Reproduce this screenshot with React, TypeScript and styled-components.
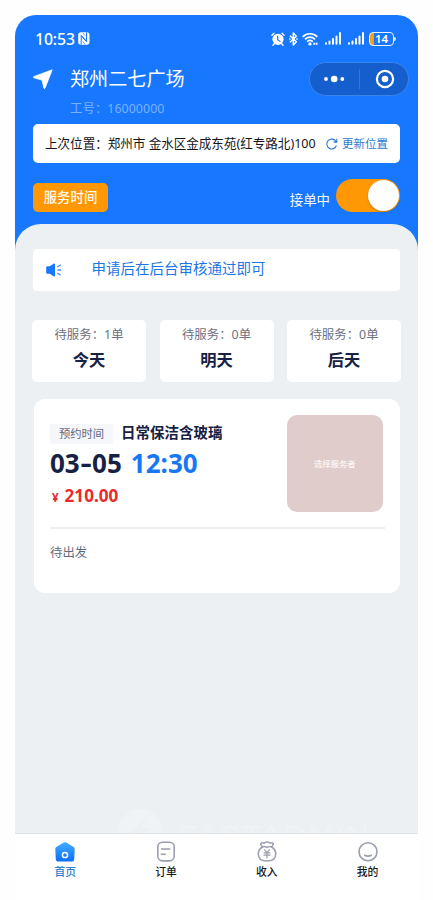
import React from 'react';
import styled, { createGlobalStyle } from 'styled-components';

const GlobalStyle = createGlobalStyle`
  * { box-sizing: border-box; }
  body {
    margin: 0;
    background: #fefefe;
    font-family: "Noto Sans", "Noto Sans CJK SC", sans-serif;
  }
  svg { display: block; flex: none; }
`;

const Stage = styled.div`
  height: 900px;
  padding: 15px 15px 0;
  overflow: hidden;
`;

const Phone = styled.main`
  width: 403px;
  height: 885px;
  display: flex;
  flex-direction: column;
`;

const Screen = styled.div`
  height: 818px;
  background: #1877ff;
  border-radius: 21px 21px 0 0;
  overflow: hidden;
`;

const Header = styled.header`
  height: 209px;
  padding: 0 18px;
`;

const StatusBar = styled.div`
  height: 47px;
  padding: 0 4px 0 2px;
  display: flex;
  align-items: center;
  color: #fff;
`;

const Clock = styled.span`
  font-size: 15.8px;
  line-height: 20px;
  font-weight: 500;
  letter-spacing: -0.1px;
  margin-right: 3px;
`;

const StatusIcons = styled.div`
  margin-left: auto;
  display: flex;
  align-items: center;
`;

const Gap = styled.span<{ $w: number }>`
  width: ${p => p.$w}px;
`;

const Battery = styled.div`
  width: 25px;
  height: 14px;
  border: 1px solid #e9f2ff;
  border-radius: 4px;
  background: linear-gradient(90deg, #ff9c16 4px, transparent 4px);
  font-size: 11.5px;
  font-weight: 600;
  line-height: 12px;
  text-align: center;
  color: #fff;
`;

const BatteryTip = styled.i`
  width: 2px;
  height: 4px;
  border-radius: 0 2px 2px 0;
  background: #d5e6ff;
`;

const TitleRow = styled.div`
  height: 34px;
  display: flex;
  align-items: center;
  margin-right: -9px;
`;

const Place = styled.h1`
  margin: -2px 0 0 17px;
  font: 400 19.1px/28px "Noto Sans CJK SC", sans-serif;
  color: #fff;
`;

const Capsule = styled.div`
  width: 100px;
  height: 34px;
  margin-left: auto;
  border: 1px solid #3b83e8;
  border-radius: 17px;
  background: #145fcd;
  display: flex;
  align-items: center;
  justify-content: center;
`;

const StaffId = styled.div`
  margin: 3px 0 0 37px;
  padding-top: 1px;
  height: 25px;
  font-size: 12.4px;
  line-height: 18px;
  color: #7bb2ff;
  letter-spacing: 0.05px;
`;

const LocationCard = styled.section`
  height: 39px;
  padding: 0 12px;
  border-radius: 5px;
  background: #fff;
  display: flex;
  align-items: center;
  justify-content: space-between;
  white-space: nowrap;
`;

const Address = styled.span`
  font-size: 12.55px;
  line-height: 18px;
  color: #15161a;
`;

const Refresh = styled.button`
  padding: 0;
  border: 0;
  background: none;
  display: flex;
  align-items: center;
  gap: 4px;
  font: 400 11.5px/16px "Noto Sans CJK SC", sans-serif;
  color: #2a7bd2;
`;

const RefreshText = styled.span`
  margin-top: -2px;
`;

const ActionRow = styled.div`
  margin-top: 16px;
  height: 33px;
  display: flex;
  align-items: center;
`;

const TimeButton = styled.button`
  width: 75px;
  height: 29px;
  margin-top: 4px;
  padding: 0 0 3px;
  border: 0;
  border-radius: 5px;
  background: #ff9804;
  font: 500 13.4px/26px "Noto Sans CJK SC", sans-serif;
  color: #fffbea;
`;

const SwitchLabel = styled.span`
  margin: 6px 6px 0 auto;
  font: 400 13.4px/20px "Noto Sans CJK SC", sans-serif;
  color: #f4f9ff;
`;

const Switch = styled.div`
  width: 64px;
  height: 33px;
  padding: 1px;
  border-radius: 17px;
  background: #ff9804;
  display: flex;
  justify-content: flex-end;
`;

const Knob = styled.div`
  width: 31px;
  height: 31px;
  border-radius: 50%;
  background: #fff;
  box-shadow: 0 1px 2px rgba(90, 60, 0, 0.35);
`;

const Content = styled.div`
  height: 609px;
  padding: 25px 18px 0;
  border-radius: 26px 26px 0 0;
  background: #ecf0f3;
  display: flex;
  flex-direction: column;
`;

const Notice = styled.section`
  height: 42px;
  padding: 0 13px;
  border-radius: 4px;
  background: #fff;
  display: flex;
  align-items: center;
  gap: 29.5px;
  font: 400 14.5px/20px "Noto Sans CJK SC", sans-serif;
  color: #1b77e6;
`;

const NoticeText = styled.span`
  margin-top: -4px;
`;

const Days = styled.section`
  margin: 29px -1px 0;
  display: grid;
  grid-template-columns: repeat(3, 1fr);
  gap: 13.5px;
`;

const DayCard = styled.div`
  height: 62px;
  padding-top: 6px;
  border-radius: 5px;
  background: #fff;
  text-align: center;
`;

const DayCount = styled.div`
  font-size: 12.4px;
  line-height: 18px;
  color: #6d7182;
`;

const DayName = styled.div`
  margin-top: 3px;
  font: 700 16.3px/24px "Noto Sans CJK SC", sans-serif;
  color: #172144;
`;

const Order = styled.article`
  margin: 17px 0 0 1px;
  width: 366px;
  height: 194px;
  padding: 16px 15px 0 16px;
  border-radius: 11px;
  background: #fff;
`;

const OrderTop = styled.div`
  height: 114px;
  border-bottom: 2px solid #ebeff1;
  display: flex;
  justify-content: space-between;
`;

const OrderInfo = styled.div`
  padding-top: 5px;
`;

const OrderTitle = styled.div`
  display: flex;
  align-items: center;
`;

const Tag = styled.span`
  width: 63px;
  height: 20px;
  margin: 4px 8px 0 0;
  background: #f5f7fa;
  font: 400 11.3px/18px "Noto Sans CJK SC", sans-serif;
  text-align: center;
  color: #61697f;
`;

const ServiceName = styled.strong`
  font: 700 14.5px/20px "Noto Sans CJK SC", sans-serif;
  color: #172144;
`;

const When = styled.div`
  margin-top: 1px;
  display: flex;
  gap: 9px;
  font-size: 26px;
  line-height: 36px;
  font-weight: 700;
`;

const DateText = styled.span`
  color: #172144;
  display: flex;
`;

const Dash = styled.span`
  transform: scaleX(1.35);
  margin: 0 2px;
`;

const TimeText = styled.span`
  color: #1877f5;
`;

const Price = styled.div`
  margin-top: 3px;
  padding-left: 2px;
  font-size: 17.1px;
  line-height: 24px;
  font-weight: 700;
  color: #ea2b2c;
`;

const Yen = styled.span`
  font-size: 11.5px;
  margin-right: 6px;
`;

const Picker = styled.button`
  width: 96.5px;
  height: 97px;
  margin-right: 2px;
  padding: 0 0 1px;
  border: 0;
  border-radius: 10px;
  background: #e0cdcb;
  font: 500 8.3px/12px "Noto Sans CJK SC", sans-serif;
  color: #fbf6f5;
`;

const OrderState = styled.div`
  margin-top: 13px;
  font: 400 12.4px/20px "Noto Sans CJK SC", sans-serif;
  color: #646b80;
`;

const Watermark = styled.div`
  margin: auto -18px 0 85px;
  height: 24px;
  overflow: hidden;
  display: flex;
  gap: 16px;
  color: #f0f3f5;
  white-space: nowrap;
`;

const WatermarkText = styled.span`
  margin-top: 12px;
  font: 400 32px/32px "Liberation Sans", sans-serif;
  letter-spacing: 1.2px;
`;

const TabBar = styled.nav`
  height: 67px;
  border-top: 1px solid #dfe2e4;
  background: #fff;
  display: grid;
  grid-template-columns: repeat(4, 1fr);
`;

const Tab = styled.div<{ $active?: boolean }>`
  padding-top: 7px;
  display: flex;
  flex-direction: column;
  align-items: center;
  font: 500 10.8px/16px "Noto Sans CJK SC", sans-serif;
  color: ${p => (p.$active ? '#327ecb' : '#17181c')};
`;

const NfcIcon = () => (
  <svg width="12" height="13" viewBox="0 0 12 13" fill="none">
    <rect x=".2" y=".3" width="11.3" height="12.4" rx="2.6" fill="#fff" />
    <path d="M3.2 12.6V3.6L8.4 9.6M8.5.4v9L3.3 3.4" stroke="#1877ff" strokeWidth="1" />
    <path d="m4.9 1 2.2 2.7M4.7 9.4l2.2 2.7" stroke="#1877ff" strokeWidth=".7" />
  </svg>
);

const AlarmIcon = () => (
  <svg width="14" height="14" viewBox="0 0 14 14" fill="none" stroke="#fff" strokeLinecap="round">
    <circle cx="7" cy="7.3" r="5.6" fill="#fff" stroke="none" />
    <path d="M.9 3.3 3 1.2M13.1 3.3 11 1.2M3 12l-1 1.2M11 12l1 1.2" strokeWidth="1.4" />
    <path d="M6.7 4.2v3.4L9 9.4" stroke="#1877ff" strokeWidth="1.2" />
  </svg>
);

const BluetoothIcon = () => (
  <svg width="9" height="14" viewBox="0 0 9 14" fill="none" stroke="#fff" strokeWidth="1.5" strokeLinejoin="round">
    <path d="m1 3.7 6.3 6L4.3 13V1l3 3.3L1 10.3" />
    <path d="M.2 7h1.4M7.3 7h1.4" />
  </svg>
);

const WifiIcon = () => (
  <svg width="16" height="14" viewBox="0 0 16 14" fill="none" stroke="#fff" strokeWidth="1.7">
    <path d="M.7 4.8C4.8.7 11.2.7 15.3 4.8M3 7.3c2.9-2.8 7.1-2.8 10 0M5.2 9.6c1.7-1.5 3.9-1.5 5.6 0" />
    <circle cx="8" cy="11.9" r="1.7" fill="#fff" stroke="none" />
    <path d="M11.3 11.8h4.2" strokeWidth="2" strokeDasharray="1.8 .6" />
  </svg>
);

const SignalIcon = () => (
  <svg width="16" height="13" viewBox="0 0 16 13" fill="none" stroke="#fff" strokeWidth="2" strokeLinecap="round">
    <path d="M1 11.3v.5M4.5 9.5v2.3M8 7v4.8M11.5 4.4v7.4M15 1v10.8" />
  </svg>
);

const ArrowIcon = () => (
  <svg width="20" height="20" viewBox="0 0 20 20">
    <path d="M19.2.8 12 19.2q-.6 1-1.1 0L9 11.1.5 8.7Q-.3 8.2.6 7.7Z" fill="#fff" stroke="#fff" strokeWidth=".8" strokeLinejoin="round" />
  </svg>
);

const CapsuleIcons = () => (
  <svg width="99" height="32" viewBox="0 0 99 32">
    <g fill="#fff">
      <circle cx="16" cy="16" r="1.9" />
      <circle cx="24.2" cy="16" r="3.3" />
      <circle cx="32.3" cy="16" r="1.9" />
      <circle cx="75" cy="16" r="3.3" />
    </g>
    <path d="M49.5 6v20" stroke="#3476d3" />
    <circle cx="75" cy="16" r="8.1" fill="none" stroke="#fff" strokeWidth="2.2" />
  </svg>
);

const RefreshIcon = () => (
  <svg width="12" height="12" viewBox="0 0 12 12" fill="none" stroke="#2a7bd2" strokeWidth="1.1">
    <path d="M10.4 7.5A4.9 4.9 0 1 1 10 3.6M10.8.8v3.3H7.5" />
  </svg>
);

const SpeakerIcon = () => (
  <svg width="16" height="14" viewBox="0 0 16 14">
    <path d="M.2 4.3q0-1 1-1h2.5L7.6.8q1.4-.6 1.4.7v11q0 1.3-1.4.7l-3.9-2.5H1.2q-1 0-1-1Z" fill="#1877ff" />
    <path d="m11.3 4 3.3-2.1M11.5 7h3.7M11.3 10l3.3 2.1" stroke="#438ff6" strokeWidth="1.3" fill="none" />
  </svg>
);

const BoltIcon = () => (
  <svg width="44" height="44" viewBox="0 0 44 44">
    <circle cx="22" cy="22" r="22" fill="#f0f3f5" />
    <path d="M30 7 12 24h10l-8 15 20-20H23Z" fill="#ecf0f3" />
  </svg>
);

const HomeIcon = () => (
  <svg width="22" height="22" viewBox="0 0 22 22">
    <defs>
      <linearGradient id="home" x1="0" y1="0" x2="0" y2="1">
        <stop offset="0" stopColor="#46adff" />
        <stop offset="1" stopColor="#0a6dfb" />
      </linearGradient>
    </defs>
    <path d="M9.8 1.6q1.2-.8 2.4 0l7.1 4.2q1.5.9 1.4 2.4l-.5 10.2q-.1 2.1-2.2 2.1H4q-2.1 0-2.2-2.1L1.3 8.2q-.1-1.5 1.4-2.4Z" fill="url(#home)" />
    <circle cx="11" cy="14" r="2.6" fill="none" stroke="#fff" strokeWidth="1.5" />
  </svg>
);

const OrdersIcon = () => (
  <svg width="22" height="22" viewBox="0 0 22 22" fill="none" stroke="#9a9fae" strokeWidth="1.6" strokeLinecap="round">
    <rect x="2.8" y="1.3" width="16.4" height="18.6" rx="4.6" />
    <path d="M6.5 8h8.2M6.5 13.2h3.7" />
  </svg>
);

const IncomeIcon = () => (
  <svg width="22" height="22" viewBox="0 0 22 22" fill="none" stroke="#9a9fae" strokeWidth="1.5" strokeLinecap="round" strokeLinejoin="round">
    <path d="M6.4 6C3.7 7.6 2.3 10.3 2.3 13c0 4.7 3.2 7.1 8.7 7.1s8.7-2.4 8.7-7.1c0-2.7-1.4-5.4-4.1-7" />
    <path d="M6.4 6Q4 3.6 5.1 2.3 6.5 1.3 8 2.2 9 .8 11 .9q2-.1 3 1.3 1.5-.9 2.9.1Q18 3.6 15.6 6q-1.4-.9-2.6-.3-2 1-4 0Q7.8 5.1 6.4 6Z" />
    <path d="m8.6 8.8 2.4 2.8 2.4-2.8M8 11.9h6M8 14.2h6M11 11.7v5" strokeWidth="1.2" />
  </svg>
);

const ProfileIcon = () => (
  <svg width="22" height="22" viewBox="0 0 22 22" fill="none" stroke="#9a9fae" strokeWidth="1.6" strokeLinecap="round">
    <circle cx="11" cy="10.7" r="9" />
    <path d="M7.8 14.2q3.2 1.9 6.4 0" />
  </svg>
);

const days = [
  { name: '今天', count: 1 },
  { name: '明天', count: 0 },
  { name: '后天', count: 0 },
];

const tabs = [
  { label: '首页', Icon: HomeIcon },
  { label: '订单', Icon: OrdersIcon },
  { label: '收入', Icon: IncomeIcon },
  { label: '我的', Icon: ProfileIcon },
];

export default function App() {
  return (
    <Stage>
      <GlobalStyle />
      <Phone>
        <Screen>
          <Header>
            <StatusBar>
              <Clock>10:53</Clock>
              <NfcIcon />
              <StatusIcons>
                <AlarmIcon />
                <Gap $w={4} />
                <BluetoothIcon />
                <Gap $w={4} />
                <WifiIcon />
                <Gap $w={7} />
                <SignalIcon />
                <Gap $w={7} />
                <SignalIcon />
                <Gap $w={5} />
                <Battery>14</Battery>
                <BatteryTip />
              </StatusIcons>
            </StatusBar>
            <TitleRow>
              <ArrowIcon />
              <Place>郑州二七广场</Place>
              <Capsule>
                <CapsuleIcons />
              </Capsule>
            </TitleRow>
            <StaffId>工号：16000000</StaffId>
            <LocationCard>
              <Address>上次位置：郑州市 金水区金成东苑(红专路北)100</Address>
              <Refresh>
                <RefreshIcon />
                <RefreshText>更新位置</RefreshText>
              </Refresh>
            </LocationCard>
            <ActionRow>
              <TimeButton>服务时间</TimeButton>
              <SwitchLabel>接单中</SwitchLabel>
              <Switch>
                <Knob />
              </Switch>
            </ActionRow>
          </Header>
          <Content>
            <Notice>
              <SpeakerIcon />
              <NoticeText>申请后在后台审核通过即可</NoticeText>
            </Notice>
            <Days>
              {days.map(day => (
                <DayCard key={day.name}>
                  <DayCount>待服务：{day.count}单</DayCount>
                  <DayName>{day.name}</DayName>
                </DayCard>
              ))}
            </Days>
            <Order>
              <OrderTop>
                <OrderInfo>
                  <OrderTitle>
                    <Tag>预约时间</Tag>
                    <ServiceName>日常保洁含玻璃</ServiceName>
                  </OrderTitle>
                  <When>
                    <DateText>
                      03<Dash>-</Dash>05
                    </DateText>
                    <TimeText>12:30</TimeText>
                  </When>
                  <Price>
                    <Yen>¥</Yen>210.00
                  </Price>
                </OrderInfo>
                <Picker>选择服务者</Picker>
              </OrderTop>
              <OrderState>待出发</OrderState>
            </Order>
            <Watermark>
              <BoltIcon />
              <WatermarkText>FASTADMIN</WatermarkText>
            </Watermark>
          </Content>
        </Screen>
        <TabBar>
          {tabs.map(({ label, Icon }, index) => (
            <Tab key={label} $active={index === 0}>
              <Icon />
              {label}
            </Tab>
          ))}
        </TabBar>
      </Phone>
    </Stage>
  );
}
